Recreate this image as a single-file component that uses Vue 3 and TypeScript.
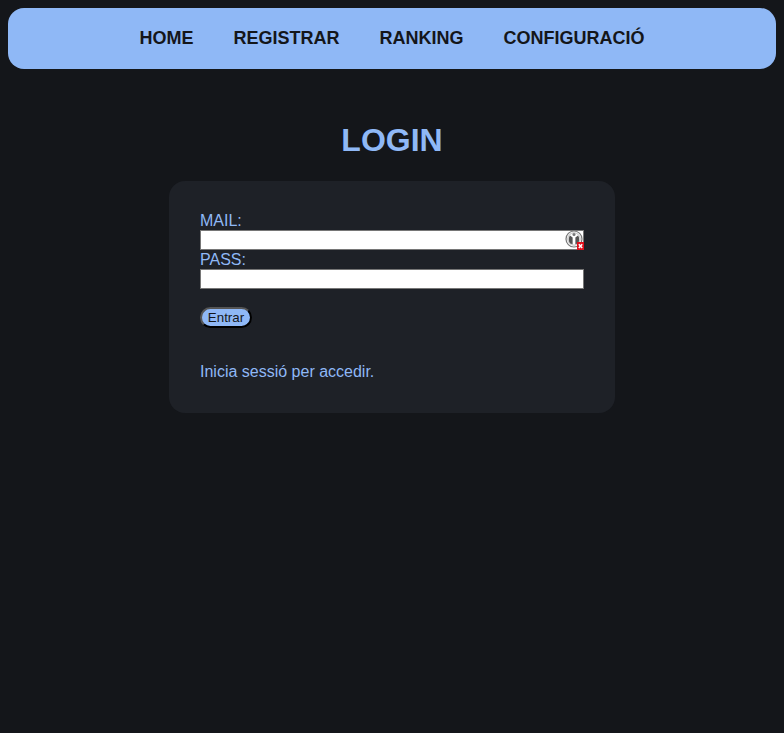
<script setup lang="ts">
const links: string[] = ['HOME', 'REGISTRAR', 'RANKING', 'CONFIGURACIÓ']
</script>

<template>
  <div class="page">
    <nav class="nav">
      <a v-for="l in links" :key="l" class="link" href="#">{{ l }}</a>
    </nav>
    <h1 class="title">LOGIN</h1>
    <main class="card">
      <form class="form" @submit.prevent>
        <label class="label" for="mail">MAIL:</label>
        <div class="field">
          <input id="mail" class="input" type="text" />
          <svg class="badge" width="19" height="20" viewBox="0 0 19 20">
            <circle cx="9" cy="9" r="8" fill="#fff" stroke="#777" stroke-width="1.2" />
            <circle cx="9" cy="9" r="6.2" fill="none" stroke="#aaa" stroke-width="0.8" />
            <path d="M5 5.5C3.6 7 3.2 11 5.2 13.5L7.6 14.2V7.5Z" fill="#555" />
            <path d="M13 5.5C14.4 7 14.8 11 12.8 13.5L10.4 14.2V7.5Z" fill="#555" />
            <circle cx="9" cy="4.6" r="1.5" fill="#777" />
            <rect x="12" y="12" width="7" height="8" fill="#e0101c" />
            <path d="M13.8 14.2L17.2 18M17.2 14.2L13.8 18" stroke="#fff" stroke-width="1.5" />
          </svg>
        </div>
        <label class="label" for="pass">PASS:</label>
        <div class="field">
          <input id="pass" class="input" type="password" />
        </div>
        <button class="btn" type="submit">Entrar</button>
      </form>
      <p class="note">Inicia sessió per accedir.</p>
    </main>
  </div>
</template>

<style>
html, body { margin: 0; background: #14161a; }
</style>

<style scoped>
.page {
  min-height: 733px;
  box-sizing: border-box;
  padding: 8px;
  background: #14161a;
  font-family: "Liberation Sans", Arial, sans-serif;
  color: #8fb8f6;
  overflow: hidden;
}
.nav {
  height: 61px;
  display: flex;
  justify-content: center;
  align-items: center;
  gap: 40px;
  background: #8fb8f6;
  border-radius: 16px;
}
.link {
  color: #14161a;
  font-size: 18px;
  font-weight: 700;
  text-decoration: none;
}
.title {
  margin: 53px 0 22px;
  text-align: center;
  font-size: 32px;
  line-height: 37px;
  font-weight: 700;
  color: #8fb8f6;
}
.card {
  width: 446px;
  height: 232px;
  box-sizing: border-box;
  margin: 0 auto;
  padding: 30px 31px;
  background: #1e2127;
  border-radius: 16px;
}
.form { display: flex; flex-direction: column; align-items: flex-start; }
.label { font-size: 16px; line-height: 19px; display: block; height: 19px; margin-top: 0; }
.field { position: relative; width: 384px; height: 20px; }
.input {
  display: block;
  width: 100%;
  height: 20px;
  box-sizing: border-box;
  margin: 0;
  padding: 1px 2px;
  background: #fff;
  border: 1px solid #767676;
  outline: none;
}
.badge { position: absolute; right: 0; top: 0; }
.btn {
  margin-top: 18px;
  width: 52px;
  height: 21px;
  padding: 0;
  font-family: "Liberation Sans", Arial, sans-serif;
  font-size: 13.33px;
  color: #14161a;
  background: #8fb8f6;
  border: 2px outset #555;
  border-radius: 11px;
}
.note { margin: 35px 0 0; font-size: 16px; line-height: 18px; }
</style>
